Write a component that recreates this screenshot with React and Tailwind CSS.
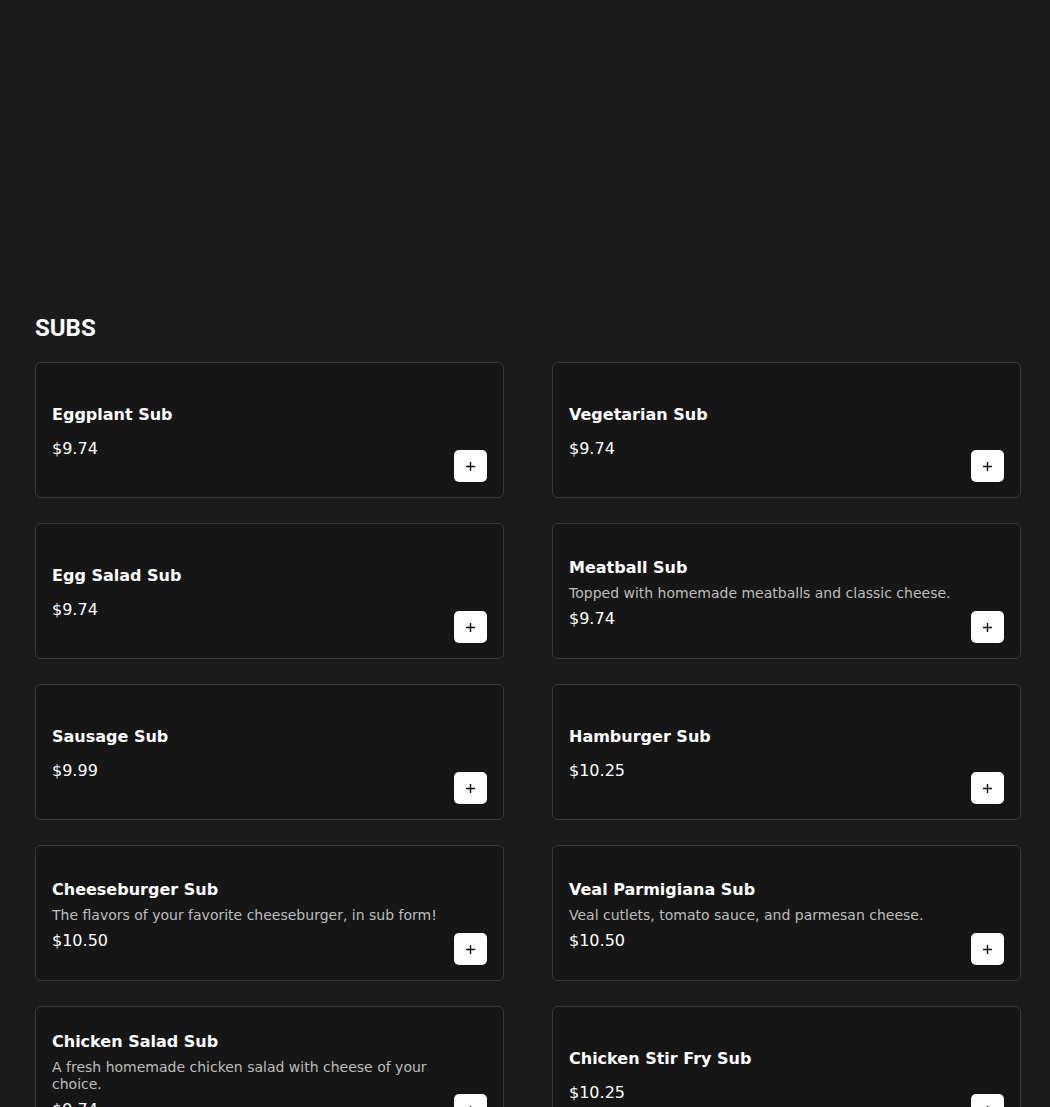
import React from 'react';

const items = [
  { name: 'Eggplant Sub', price: '$9.74' },
  { name: 'Vegetarian Sub', price: '$9.74' },
  { name: 'Egg Salad Sub', price: '$9.74' },
  { name: 'Meatball Sub', desc: 'Topped with homemade meatballs and classic cheese.', price: '$9.74' },
  { name: 'Sausage Sub', price: '$9.99' },
  { name: 'Hamburger Sub', price: '$10.25' },
  { name: 'Cheeseburger Sub', desc: 'The flavors of your favorite cheeseburger, in sub form!', price: '$10.50' },
  { name: 'Veal Parmigiana Sub', desc: 'Veal cutlets, tomato sauce, and parmesan cheese.', price: '$10.50' },
  { name: 'Chicken Salad Sub', desc: 'A fresh homemade chicken salad with cheese of your choice.', price: '$9.74' },
  { name: 'Chicken Stir Fry Sub', price: '$10.25' },
];

function PlusIcon() {
  return (
    <svg width="11" height="11" viewBox="0 0 11 11" fill="none">
      <path d="M5.5 1v9M1 5.5h9" stroke="#111" strokeWidth="1.4" />
    </svg>
  );
}

function MenuCard({ item }) {
  return (
    <div className="flex min-h-[136px] gap-4 rounded-md border border-[#3a3a3a] bg-[#161616] py-[15px] pl-4 pr-[16px]">
      <div className="flex flex-1 flex-col self-center pt-[8px] pb-[4px]">
        <div className="mb-[5px] text-[16px] leading-6 font-semibold text-white">{item.name}</div>
        {item.desc && (
          <div className="text-[14px] leading-[17px] text-[#bdbdbd]">{item.desc}</div>
        )}
        <div className="mt-[5px] text-[16px] leading-6 text-white">{item.price}</div>
      </div>
      <button className="flex h-8 w-[33px] shrink-0 items-center justify-center self-end rounded-[5px] bg-white shadow-sm">
        <PlusIcon />
      </button>
    </div>
  );
}

export default function App() {
  return (
    <div className="min-h-screen bg-[#1b1b1b] pl-[35px] pr-[29px] pt-[312px] pb-10 font-['DejaVu_Sans',sans-serif]">
      <h2 className="mb-[18px] font-['Roboto',sans-serif] text-[24px] leading-8 font-bold text-white">SUBS</h2>
      <div className="grid grid-cols-2 gap-x-12 gap-y-[25px]">
        {items.map((item) => (
          <MenuCard key={item.name} item={item} />
        ))}
      </div>
    </div>
  );
}
